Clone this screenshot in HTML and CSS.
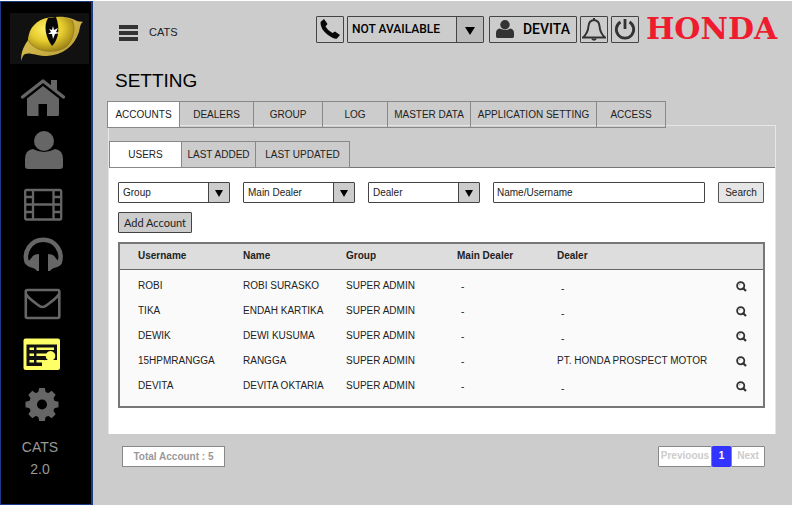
FILE: index.html
```html
<!DOCTYPE html>
<html lang="en">
<head>
<meta charset="utf-8">
<title>CATS - Setting</title>
<link rel="stylesheet" href="styles.css">
</head>
<body>
<svg class="defs" width="0" height="0" aria-hidden="true">
  <symbol id="person" viewBox="0 0 38 38"><circle cx="19" cy="10" r="10"/><path d="M8 18Q19 24 30 18Q38 19 38 28V35Q38 38 35 38H3Q0 38 0 35V28Q0 19 8 18Z"/></symbol>
  <symbol id="search" viewBox="0 0 11 11"><circle cx="4.7" cy="4.7" r="3.6" fill="none" stroke="#333" stroke-width="1.8"/><path d="M7.2 7.2L10 10" stroke="#333" stroke-width="2.2"/><path d="M3 4.5Q3.2 3.2 4.5 3" fill="none" stroke="#777" stroke-width=".8"/></symbol>
</svg>
<aside class="sidebar">
  <svg class="logo" viewBox="10 13 79 51" role="img" aria-label="Cat eye">
    <defs>
      <radialGradient id="iris" cx=".4" cy=".35" r=".65"><stop offset="0" stop-color="#fff36b"/><stop offset=".55" stop-color="#e5cb2d"/><stop offset="1" stop-color="#9f8517"/></radialGradient>
      <linearGradient id="lid" x1="0" y1="0" x2="1" y2="1"><stop offset="0" stop-color="#e5ca55"/><stop offset="1" stop-color="#b39835"/></linearGradient>
    </defs>
    <path fill="#111" d="M10 13H89V64H10Z"/>
    <path fill="url(#lid)" d="M21 61C21 50 25 45 28 40C31 26 38 20 47 18L56 17C66 16 72 19 75 20C78 22 80 21 83 22C80 24 80 28 79 32C74 47 62 55 47 56C37 56 30 52 25 54C23 55 22 58 21 61Z"/>
    <path fill="url(#iris)" d="M28 40C29 27 37 20 47 18C56 16 66 17 72 20C76 27 74 40 66 47C56 54 35 53 28 40"/>
    <path fill="none" stroke="#8d751b" stroke-width=".7" d="M72 20C76 27 74 40 66 47C56 54 35 53 28 40"/>
    <path fill="#080808" d="M48 18C43 26 46 38 52 46C59 39 60 28 56 17Z"/>
    <path fill="#fff" d="M53 26L54 30L58 28L56 32L60 33L55 34L53 39L52 34L48 34L51 32L49 29L52 30Z"/>
  </svg>
  <nav class="nav" aria-label="Main">
    <a href="#" aria-label="Home"><svg viewBox="18 73 50 51"><path d="M51 80h6v11l-6-5z"/><path d="M22.500 97L43 81L63.500 97" fill="none" stroke="#666" stroke-width="3.400" stroke-linecap="round" stroke-linejoin="round"/><path d="M27 98.500L43 86L59 98.500V114.500Q59 116 57.500 116H47V104H38.500V116H28.500Q27 116 27 114.500Z"/></svg></a>
    <a href="#" aria-label="Users"><svg viewBox="18 124 50 51"><use href="#person" x="25" y="131" width="38" height="38"/></svg></a>
    <a href="#" aria-label="Media"><svg viewBox="18 175 50 51"><g fill="none" stroke="#666" stroke-width="2.300"><rect x="25.200" y="190" width="36" height="29.500" rx="1.500"/><path d="M33 190V219M53.500 190V219M33 204.500H53.500M25 197H33M25 204.500H33M25 212H33M53.500 197H61M53.500 204.500H61M53.500 212H61"/></g></svg></a>
    <a href="#" aria-label="Calls"><svg viewBox="18 226 50 51"><path d="M27 263A17.300 17.300 0 1 1 59.500 263" fill="none" stroke="#666" stroke-width="4.500"/><path d="M39 254V271H37Q36 269 33 268Q25 266 25 262Q30 261 32 257Q34 254 39 254ZM48 254V271H50Q51 269 54 268Q62 266 62 262Q57 261 55 257Q53 254 48 254Z"/></svg></a>
    <a href="#" aria-label="Mail"><svg viewBox="18 277 50 51"><g fill="none" stroke="#666" stroke-width="2.600" stroke-linejoin="round"><rect x="25.800" y="290" width="33.500" height="28" rx="1.500"/><path d="M26 294Q27 297 38 305Q42.500 309 47 305Q58 297 59 294"/></g></svg></a>
    <a href="#" aria-label="Setting" aria-current="page"><svg viewBox="18 328 50 51"><rect x="23.500" y="338.500" width="36.500" height="31.500" rx="2" fill="#ff6"/><path fill="#111" d="M26.500 344.500H57V366H26.500Z"/><path fill="#ff6" d="M29.500 347.500h4.500v2.500h-4.500zM36.500 347.500H54v2.500H36.500zM29.500 353.500h4.500v2.500h-4.500zM36.500 353.500H47v2.500H36.500zM29.500 360h4.500v2.500h-4.500zM36.500 360H44v2.500H36.500zM42 366V363Q42 360.500 45 360H48A4.800 4.800 0 1 1 53 360H57V367H42Z"/></svg></a>
    <a href="#" aria-label="Preferences"><svg viewBox="18 379 50 51"><g transform="translate(42 404.500)"><circle r="9" fill="none" stroke="#666" stroke-width="8"/><g id="teeth"><path d="M-4 -11L-2.800 -16.500H2.800L4 -11ZM-4 11L-2.800 16.500H2.800L4 11ZM-11 -4L-16.500 -2.800V2.800L-11 4ZM11 -4L16.500 -2.800V2.800L11 4Z"/></g><use href="#teeth" transform="rotate(45)"/></g></svg></a>
  </nav>
  <p class="version">CATS<br>2.0</p>
</aside>
<main class="main">
  <header class="topbar">
    <button class="menu" aria-label="Menu"><svg width="21" height="18" viewBox="0 0 21 18"><path fill="#333" d="M1 1h19v4H1zM1 7h19v4H1zM1 13h19v4H1z"/></svg></button>
    <span class="brand">CATS</span>
    <div class="tools">
      <button class="tool" aria-label="Phone"><svg width="22" height="22" viewBox="0 0 22 22"><path fill="#080808" d="M1.500 4L5 1L8.500 6L6.500 8.500Q9 13 13.500 15L16 13.500L21 17L18 20.500Q15 21.500 9 17Q1 11 1.500 4Z"/></svg></button>
      <span class="pick status"><select aria-label="Status"><option>NOT AVAILABLE</option></select></span>
      <button class="tool user"><svg width="18" height="18" fill="#333"><use href="#person"/></svg>DEVITA</button>
      <button class="tool" aria-label="Notifications"><svg width="24" height="24" viewBox="0 0 24 24" fill="none" stroke="#333" stroke-width="2"><path d="M1 20.500Q6 16 6.500 9Q7 3.500 12 3Q17 3.500 17.500 9Q18 16 23 20.500Z"/><path d="M12 3V1M10 21.500Q12 24 14 21.500"/></svg></button>
      <button class="tool" aria-label="Power"><svg width="22" height="22" viewBox="0 0 22 22" fill="none" stroke="#333" stroke-width="2.800"><path d="M6.500 4A8.700 8.700 0 1 0 15.500 4M11 1V11"/></svg></button>
    </div>
    <strong class="honda">HONDA</strong>
  </header>
  <h1>SETTING</h1>
  <nav class="tabs" aria-label="Setting sections">
    <a class="w73 on" href="#">ACCOUNTS</a><a class="w74" href="#">DEALERS</a><a class="w69" href="#">GROUP</a><a class="w65" href="#">LOG</a><a class="w83" href="#">MASTER DATA</a><a class="w126" href="#">APPLICATION SETTING</a><a class="w69" href="#">ACCESS</a>
  </nav>
  <section class="panel">
    <nav class="tabs sub" aria-label="Account lists">
      <a class="w73 on" href="#">USERS</a><a class="w74" href="#">LAST ADDED</a><a class="w94" href="#">LAST UPDATED</a>
    </nav>
    <div class="body">
      <form class="filters">
        <span class="pick"><select aria-label="Group"><option>Group</option></select></span>
        <span class="pick"><select aria-label="Main Dealer"><option>Main Dealer</option></select></span>
        <span class="pick"><select aria-label="Dealer"><option>Dealer</option></select></span>
        <input type="text" aria-label="Name or username" placeholder="Name/Username">
        <button class="find" type="button">Search</button>
      </form>
      <button class="add">Add Account</button>
      <div class="frame">
        <table>
          <colgroup><col class="c1"><col class="c2"><col class="c3"><col class="c4"><col><col class="c6"></colgroup>
          <thead><tr><th>Username</th><th>Name</th><th>Group</th><th>Main Dealer</th><th>Dealer</th><th></th></tr></thead>
          <tbody>
            <tr><td>ROBI</td><td>ROBI SURASKO</td><td>SUPER ADMIN</td><td>-</td><td class="none">-</td><td><button class="view" aria-label="View ROBI"><svg width="11" height="11"><use href="#search"/></svg></button></td></tr>
            <tr><td>TIKA</td><td>ENDAH KARTIKA</td><td>SUPER ADMIN</td><td>-</td><td class="none">-</td><td><button class="view" aria-label="View TIKA"><svg width="11" height="11"><use href="#search"/></svg></button></td></tr>
            <tr><td>DEWIK</td><td>DEWI KUSUMA</td><td>SUPER ADMIN</td><td>-</td><td class="none">-</td><td><button class="view" aria-label="View DEWIK"><svg width="11" height="11"><use href="#search"/></svg></button></td></tr>
            <tr><td>15HPMRANGGA</td><td>RANGGA</td><td>SUPER ADMIN</td><td>-</td><td>PT. HONDA PROSPECT MOTOR</td><td><button class="view" aria-label="View 15HPMRANGGA"><svg width="11" height="11"><use href="#search"/></svg></button></td></tr>
            <tr><td>DEVITA</td><td>DEVITA OKTARIA</td><td>SUPER ADMIN</td><td>-</td><td class="none">-</td><td><button class="view" aria-label="View DEVITA"><svg width="11" height="11"><use href="#search"/></svg></button></td></tr>
          </tbody>
        </table>
      </div>
    </div>
  </section>
  <footer class="foot">
    <span class="total">Total Account : 5</span>
    <nav class="pages" aria-label="Pages"><button class="prev">Previoous</button><button class="now" aria-current="page">1</button><button class="next">Next</button></nav>
  </footer>
</main>
</body>
</html>
```
FILE: styles.css
```css
* { box-sizing: border-box; }

body {
  margin: 0;
  min-height: 100vh;
  display: flex;
  border-top: 1px solid #fff;
  border-right: 1px solid #fff;
  background: #ccc;
  color: #222;
  font: 10px/12px "Liberation Sans", Arial, sans-serif;
}

.defs { position: absolute; }
svg { display: block; flex: none; }
a { color: inherit; text-decoration: none; }
button, input, select {
  margin: 0;
  padding: 0;
  border: 0;
  border-radius: 1px;
  background: none;
  color: inherit;
  font: inherit;
}

/* Sidebar */
.sidebar {
  flex: none;
  width: 93px;
  background: #000;
  border: 1px solid #1b3a86;
  border-right-width: 2px;
}
.logo { width: 79px; height: 51px; margin: 11px 0 9px 9px; }
.nav { padding-left: 17px; fill: #666; }
.nav a { display: block; width: 50px; height: 51px; }
.version {
  margin: 6px 12px 0 0;
  color: #999;
  font-size: 14px;
  line-height: 22px;
  text-align: center;
}

/* Header */
.main { flex: 1; min-width: 0; padding: 14px 16px 0 14px; }
.topbar {
  display: flex;
  align-items: center;
  height: 28px;
  margin-right: -7px;
  padding-left: 11px;
}
.menu { margin-top: 8px; }
.brand { margin: 5px 0 0 10px; font-size: 11px; }
.tools { display: flex; gap: 3px; margin-left: auto; }
.tool {
  display: flex;
  align-items: center;
  justify-content: center;
  width: 28px;
  height: 27px;
  border: 1px solid #444;
}
.user {
  width: 88px;
  gap: 9px;
  margin-left: 2px;
  color: #000;
  font: 500 14px/16px Roboto, sans-serif;
}
.honda {
  width: 137px;
  margin-left: 7px;
  color: #ee1c2e;
  font: bold 30px/28px "DejaVu Serif", serif;
}

/* Drop-downs */
.pick { position: relative; display: flex; width: 112px; height: 21px; background: #fff; }
.pick select {
  appearance: none;
  width: 100%;
  padding: 0 24px 0 4px;
  border: 1px solid #444;
}
.pick::after {
  content: "";
  position: absolute;
  inset: 1px 1px 1px auto;
  width: 20px;
  border-left: 1px solid #444;
  background: #ccc;
  pointer-events: none;
}
.pick::before {
  content: "";
  position: absolute;
  z-index: 1;
  right: 7px;
  top: 8px;
  border: 4px solid transparent;
  border-top: 7px solid #000;
  border-bottom: 0;
  pointer-events: none;
}
.status { width: 137px; height: 27px; background: none; }
.status select { color: #000; font: 500 12px/14px Roboto, sans-serif; }
.status::after { width: 26px; background: #bbb; }
.status::before { right: 9px; top: 11px; border-width: 8px 5px 0; }

h1 {
  margin: 27px 0 0 8px;
  color: #000;
  font-size: 19px;
  font-weight: normal;
  line-height: 22px;
}

/* Tabs */
.tabs { position: relative; display: flex; margin-top: 9px; }
.tabs a {
  height: 27px;
  margin-right: -1px;
  border: 1px solid #888;
  line-height: 25px;
  text-align: center;
  white-space: nowrap;
}
.tabs .on { background: #fff; }
.w65 { width: 66px; }
.w69 { width: 70px; }
.w73 { width: 73px; }
.w74 { width: 75px; }
.w83 { width: 84px; }
.w94 { width: 95px; }
.w126 { width: 127px; }

.panel { margin: -3px 0 0 1px; border: 1px solid #e6e6e6; border-bottom: 0; }
.sub { margin-top: 15px; border-bottom: 1px solid #777; }
.sub a { margin-bottom: -1px; }
.body { padding: 14px 10px 26px 9px; background: #fff; }

.filters { display: flex; gap: 13px; margin-right: 1px; }
.filters input { flex: 1; min-width: 0; height: 21px; padding: 0 3px; border: 1px solid #444; }
.filters input::placeholder { color: #222; opacity: 1; }
.find { width: 46px; height: 21px; border: 1px solid #555; background: #e6e6e6; }
.add {
  width: 74px;
  height: 21px;
  margin-top: 9px;
  border: 1px solid #444;
  background: #ccc;
  font: 11px/14px Lato, sans-serif;
}

/* Table */
.frame { margin-top: 9px; padding-bottom: 7px; border: 2px solid #777; background: #fafafa; }
table { width: 100%; border-collapse: collapse; table-layout: fixed; }
.c1 { width: 123px; }
.c2 { width: 103px; }
.c3 { width: 111px; }
.c4 { width: 100px; }
.c6 { width: 27px; }
th {
  height: 25px;
  padding: 0;
  border-bottom: 1px solid #666;
  background: #ddd;
  text-align: left;
}
td { height: 25px; padding: 0; white-space: nowrap; }
th:first-child, td:first-child { padding-left: 18px; }
tbody::before { content: ""; display: block; height: 4px; }
td:nth-child(4) { padding: 2px 0 0 4px; }
.none { padding: 6px 0 0 4px; }
.view { display: block; }

/* Footer */
.foot {
  display: flex;
  justify-content: space-between;
  padding: 12px 11px 0 15px;
  color: #999;
  font-weight: bold;
}
.total {
  width: 103px;
  height: 21px;
  border: 1px solid #888;
  background: #fff;
  line-height: 19px;
  text-align: center;
}
.pages { display: flex; }
.pages button { height: 21px; border: 1px solid #888; background: #fff; color: #ccc; }
.pages .prev { width: 54px; }
.pages .now { width: 19px; border-color: #33f; background: #33f; color: #fff; }
.pages .next { width: 34px; }
```
